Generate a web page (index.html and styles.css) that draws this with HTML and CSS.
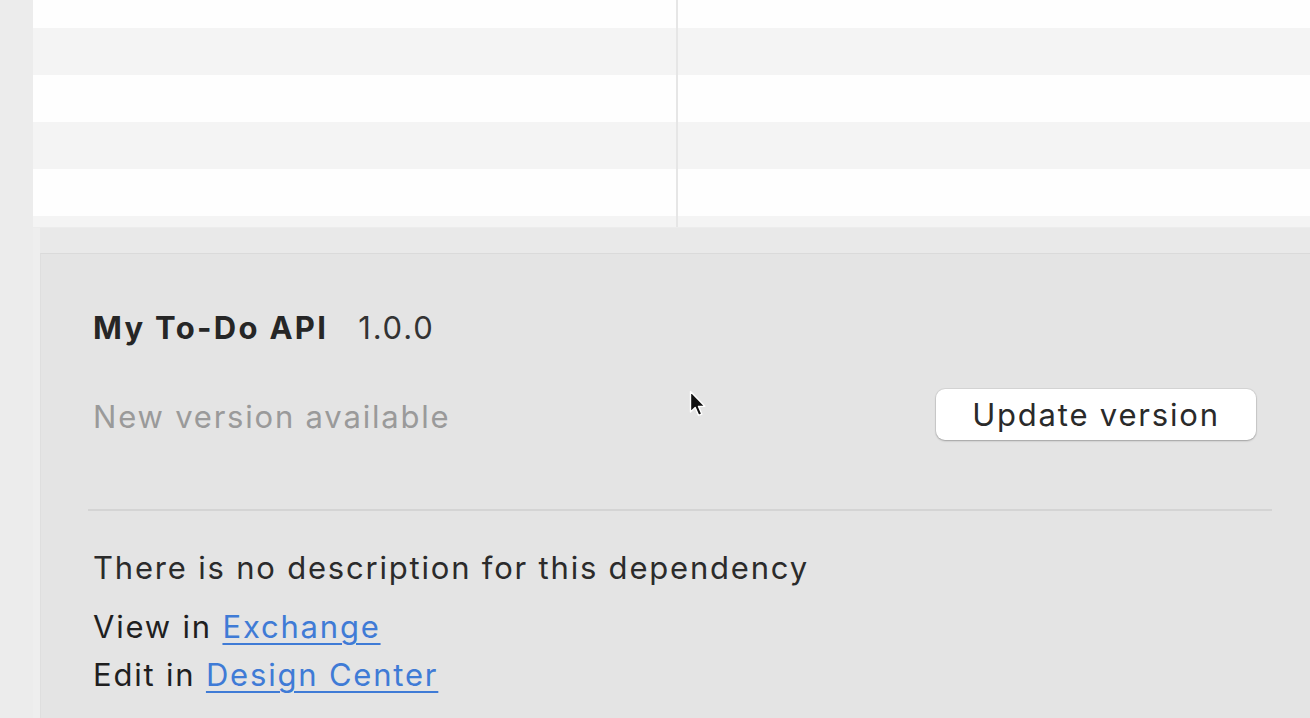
FILE: index.html
```html
<!DOCTYPE html>
<html lang="en">
<head>
<meta charset="utf-8">
<title>Dependency details</title>
<link rel="stylesheet" href="styles.css">
</head>
<body>
<div class="window">
  <div class="sidebar"></div>
  <div class="main">
    <div class="table">
      <div class="row white short"><div class="cell"></div><div class="cell col2"></div></div>
      <div class="row gray"><div class="cell"></div><div class="cell col2"></div></div>
      <div class="row white"><div class="cell"></div><div class="cell col2"></div></div>
      <div class="row gray"><div class="cell"></div><div class="cell col2"></div></div>
      <div class="row white"><div class="cell"></div><div class="cell col2"></div></div>
      <div class="row gray tail"><div class="cell"></div><div class="cell col2"></div></div>
    </div>
    <div class="lower">
      <div class="band"></div>
      <div class="panel">
        <div class="title-row">
          <span class="name">My To-Do API</span>
          <span class="version">1.0.0</span>
        </div>
        <div class="status-row">
          <span class="status">New version available</span>
          <button class="btn">Update version</button>
        </div>
        <div class="sep"></div>
        <p class="desc">There is no description for this dependency</p>
        <div class="links">
          <div>View in <a href="#">Exchange</a></div>
          <div>Edit in <a href="#">Design Center</a></div>
        </div>
      </div>
    </div>
  </div>
</div>
<svg class="cursor" width="18" height="28" viewBox="0 0 18 28" aria-hidden="true">
  <path d="M1.5 1.5 L1.5 22 L6.2 17.6 L9.6 25.4 L12.8 24 L9.5 16.4 L15.8 16.2 Z" fill="#111" stroke="#fff" stroke-width="1.4" stroke-linejoin="round"/>
</svg>
</body>
</html>
```
FILE: styles.css
```css
html, body {
  margin: 0;
  padding: 0;
}
body {
  width: 1310px;
  height: 718px;
  overflow: hidden;
  background: #ececec;
  font-family: "Inter", "Liberation Sans", sans-serif;
  position: relative;
}
.window {
  display: flex;
  height: 718px;
}
.sidebar {
  width: 33px;
  flex: none;
  background: #ececec;
}
.main {
  flex: 1;
  display: flex;
  flex-direction: column;
  min-width: 0;
}
.table {
  display: flex;
  flex-direction: column;
  height: 228px;
  flex: none;
}
.row {
  display: grid;
  grid-template-columns: 643px 1fr;
  height: 47px;
  flex: none;
}
.row.short { height: 28px; }
.row.tail { height: 11px; }
.row.white { background: #fefefe; }
.row.gray { background: #f4f4f4; }
.col2 {
  border-left: 2px solid #e6e6e6;
}
.lower {
  flex: 1;
  display: flex;
  flex-direction: column;
  padding-left: 7px;
  background: #eeeeee;
}
.band {
  height: 25px;
  flex: none;
  background: #e9e9e9;
}
.panel {
  flex: 1;
  background: #e4e4e4;
  border-top: 1px solid #dadada;
  border-left: 1px solid #dedede;
  padding: 0 54px 0 52px;
  color: #262626;
  font-size: 31px;
  letter-spacing: 1.8px;
}
.title-row {
  display: flex;
  align-items: baseline;
  gap: 30px;
  margin-top: 56px;
  line-height: 36px;
}
.name {
  font-weight: 700;
  letter-spacing: 2.3px;
}
.version {
  font-weight: 400;
  color: #333;
}
.status-row {
  display: flex;
  justify-content: space-between;
  align-items: center;
  margin-top: 43px;
}
.status {
  color: #9a9a9a;
  line-height: 36px;
  padding-top: 4px;
}
.btn {
  width: 320px;
  height: 51px;
  border: none;
  border-radius: 9px;
  background: #ffffff;
  box-shadow: 0 1px 2px rgba(0,0,0,0.25), 0 0 0 1px rgba(0,0,0,0.06);
  font-family: inherit;
  font-size: 31px;
  letter-spacing: 1.8px;
  color: #2a2a2a;
  padding: 0;
}
.sep {
  height: 2px;
  background: #d4d4d4;
  margin: 69px -16px 0 -5px;
}
.desc {
  margin: 39px 0 0 0;
  line-height: 36px;
  color: #2b2b2b;
}
.links {
  margin-top: 17px;
  line-height: 48px;
  color: #1f1f1f;
}
.links a {
  color: #3f7bd6;
  text-decoration: underline;
  text-underline-offset: 5px;
  text-decoration-thickness: 2px;
}
.cursor {
  position: absolute;
  left: 689px;
  top: 390px;
}
```
